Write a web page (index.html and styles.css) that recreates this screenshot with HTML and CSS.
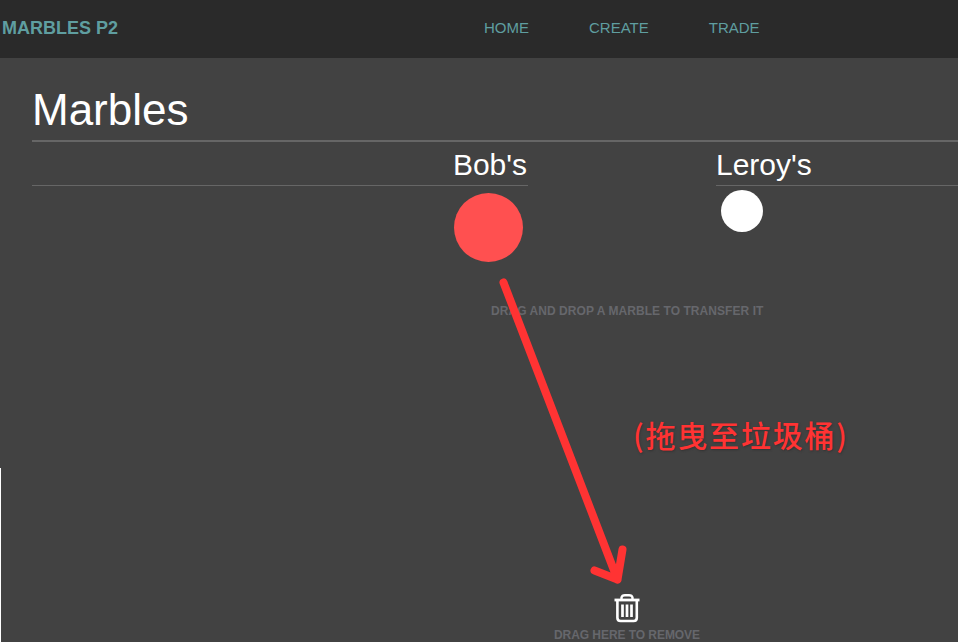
FILE: index.html
```
<!DOCTYPE html>
<html lang="en">
<head>
<meta charset="utf-8">
<title>Marbles P2</title>
<link rel="stylesheet" href="styles.css">
</head>
<body>
<header class="topbar">
  <div class="brand">MARBLES P2</div>
  <nav class="nav"><a>HOME</a><a>CREATE</a><a>TRADE</a></nav>
</header>
<main class="page">
  <h1 class="title">Marbles</h1>
  <div class="owners">
    <section class="owner owner-bob">
      <h2 class="owner-name">Bob's</h2>
      <div class="marble marble-red"></div>
    </section>
    <section class="owner owner-leroy">
      <h2 class="owner-name">Leroy's</h2>
      <div class="marble marble-white"></div>
    </section>
  </div>
  <p class="hint hint-transfer">DRAG AND DROP A MARBLE TO TRANSFER IT</p>
  <div class="trash">
    <svg class="trash-icon" width="26" height="30" viewBox="0 0 26 30" fill="none" stroke="#fff">
      <path d="M0.5 7H25.5" stroke-width="2.8"/>
      <path d="M7.5 6V4.6Q8 2.2 11 2.2H15Q18 2.2 18.5 4.6V6" stroke-width="2.4"/>
      <path d="M3.4 7V24.8Q3.4 28 6.6 28H19.6Q22.8 28 22.8 24.8V7" stroke-width="2.6"/>
      <path d="M8.5 11.5V24M13 11.5V24M17.5 11.5V24" stroke-width="2.7"/>
    </svg>
    <p class="hint hint-remove">DRAG HERE TO REMOVE</p>
  </div>
</main>
<div class="edge"></div>
<svg class="arrow" width="958" height="642" viewBox="0 0 958 642" fill="none" stroke="#ff3333" stroke-width="8" stroke-linecap="round" stroke-linejoin="round">
  <path d="M503.5 282.5L617.5 579.5M594.5 570.5L617.5 579.5L622.5 549.5"/>
</svg>
<div class="note" lang="zh-TW">(拖曳至垃圾桶)</div>
</body>
</html>
```
FILE: styles.css
```
* { box-sizing: border-box; }
body {
  margin: 0;
  height: 642px;
  overflow: hidden;
  position: relative;
  background: #424242;
  color: #fff;
  font-family: "Liberation Sans", Arial, sans-serif;
}
h1, h2, p { margin: 0; font-weight: normal; }
.topbar {
  display: flex;
  align-items: center;
  height: 58px;
  padding: 0 0 2px 2px;
  background: #2a2a2a;
  color: #5f9ea0;
}
.brand { width: 482px; font-size: 18px; font-weight: bold; line-height: 22px; }
.nav { display: flex; gap: 60px; font-size: 15px; line-height: 18px; }
.page { padding-left: 32px; }
.title {
  height: 84px;
  padding-top: 26px;
  border-bottom: 2px solid #666;
  font-size: 44px;
  line-height: 51px;
}
.owners { display: flex; gap: 188px; height: 162px; }
.owner-bob { width: 496px; }
.owner-leroy { flex: 1; }
.owner-name {
  height: 44px;
  padding-top: 5px;
  border-bottom: 1px solid #666;
  font-size: 30px;
  line-height: 35px;
}
.owner-bob .owner-name { padding-right: 1px; text-align: right; }
.marble { border-radius: 50%; }
.marble-red { width: 69px; height: 69px; margin: 7px 5px 0 auto; background: #ff5050; }
.marble-white { width: 42px; height: 42px; margin: 4px 0 0 5px; background: #fff; }
.hint { color: #66676c; font-size: 12px; font-weight: bold; line-height: 14px; white-space: nowrap; }
.hint-transfer { margin-left: 459px; letter-spacing: 0.06px; }
.trash { display: flex; flex-direction: column; align-items: center; width: 146px; margin: 275px 0 0 522px; }
.trash-icon { margin-bottom: 5px; }
.hint-remove { letter-spacing: -0.06px; }
.edge { position: absolute; left: 0; top: 468px; width: 1px; height: 174px; background: #fff; }
.arrow { position: absolute; left: 0; top: 0; }
.note {
  position: absolute;
  left: 633px;
  top: 412px;
  color: #ff3333;
  font: 500 30px/44px "Noto Sans CJK TC", sans-serif;
  letter-spacing: 1.8px;
  white-space: nowrap;
  text-shadow: 1px 1px 2px #333;
}
```
